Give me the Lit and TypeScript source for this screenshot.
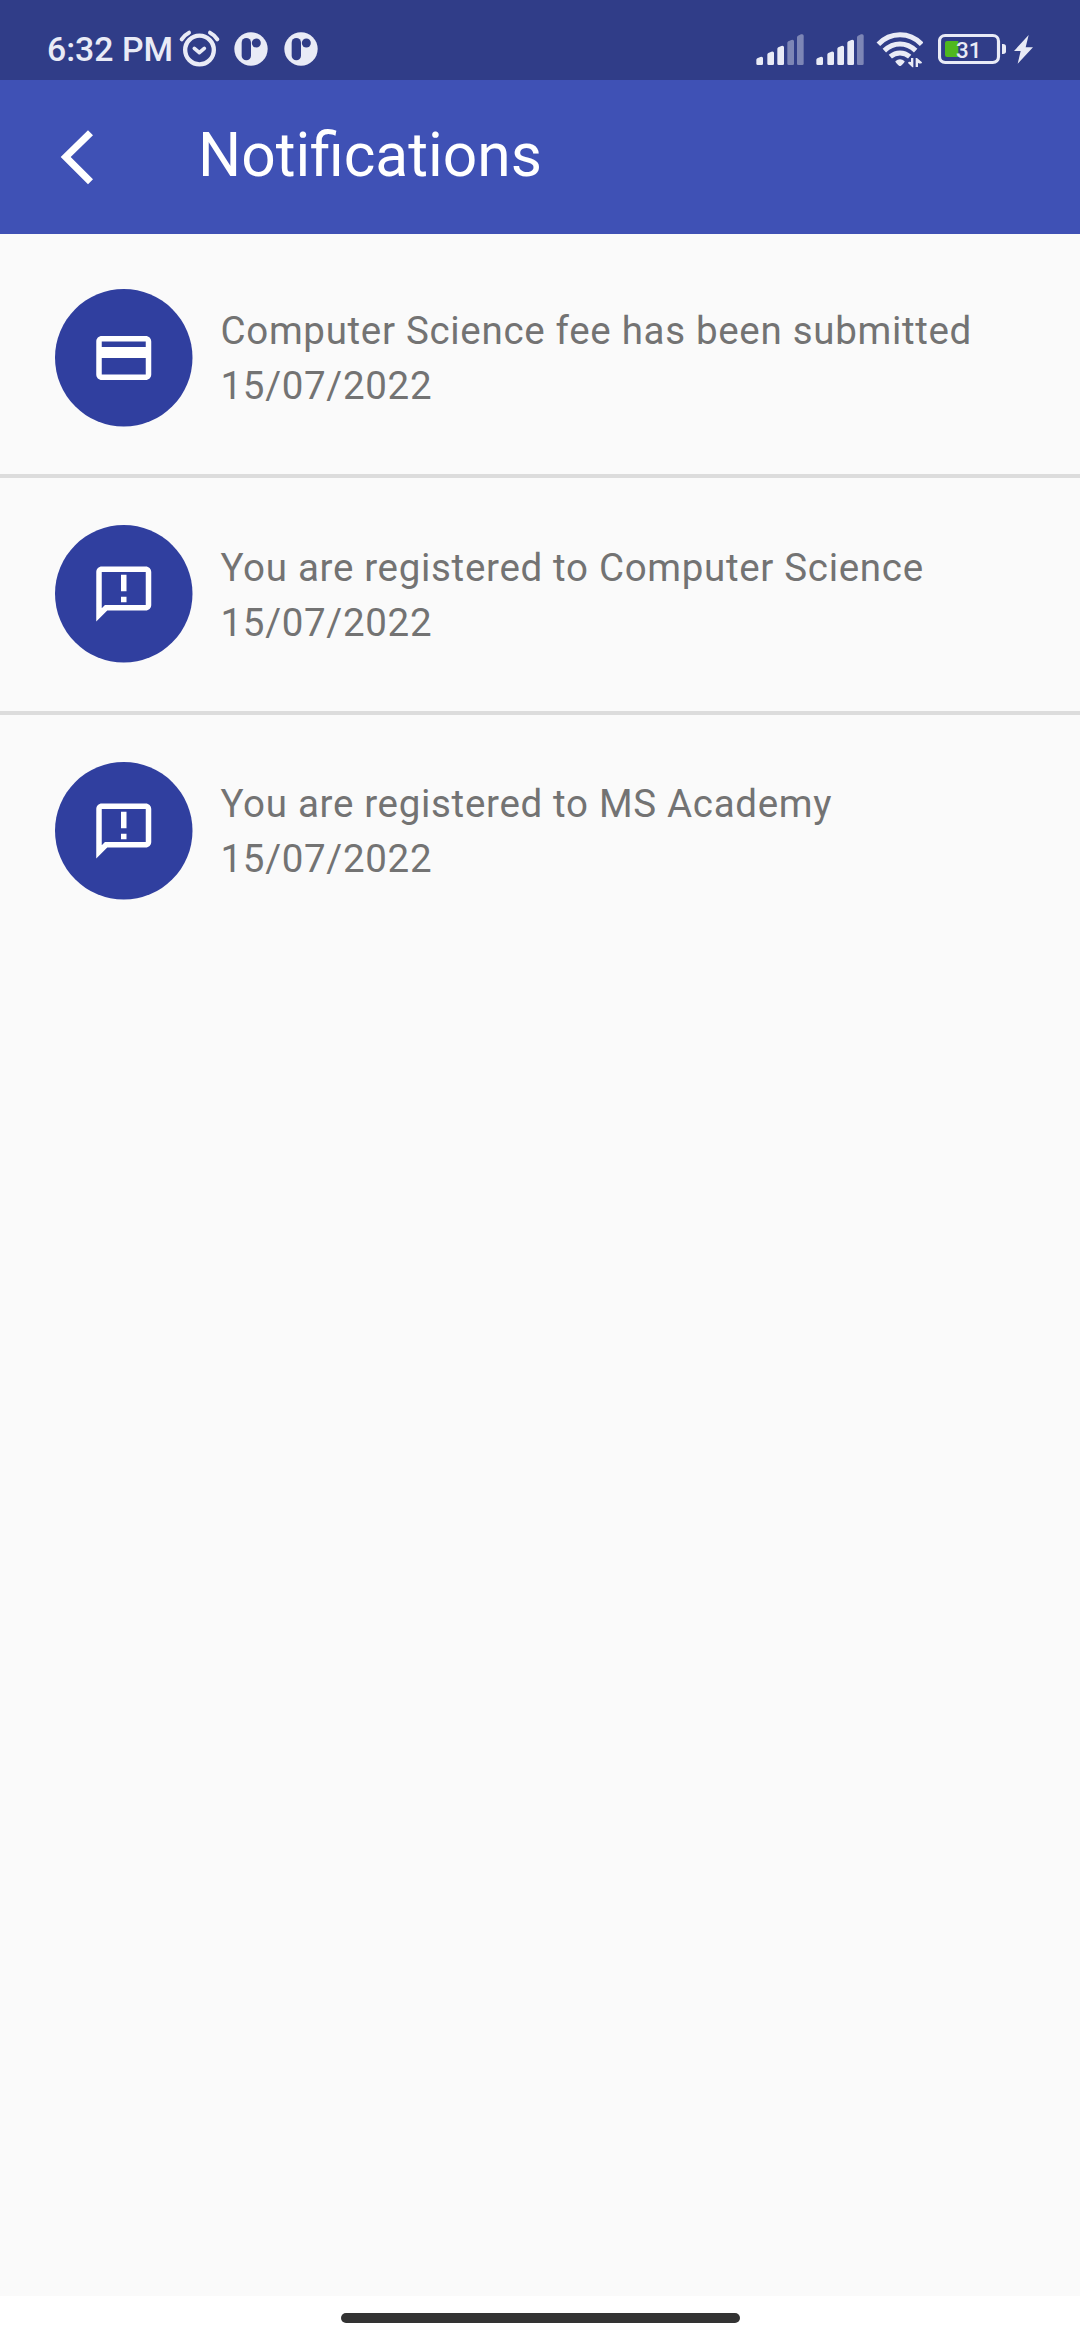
import { LitElement, html, css, svg } from "lit";
import { customElement, property } from "lit/decorators.js";

type Kind = "payment" | "announcement";

interface Notice {
  kind: Kind;
  text: string;
  date: string;
}

const NOTICES: Notice[] = [
  { kind: "payment", text: "Computer Science fee has been submitted", date: "15/07/2022" },
  { kind: "announcement", text: "You are registered to Computer Science", date: "15/07/2022" },
  { kind: "announcement", text: "You are registered to MS Academy", date: "15/07/2022" },
];

const GLYPHS: Record<Kind, string> = {
  payment:
    "M20 4H4c-1.11 0-1.99.89-1.99 2L2 18c0 1.11.89 2 2 2h16c1.11 0 2-.89 2-2V6c0-1.11-.89-2-2-2zm0 14H4v-6h16v6zm0-10H4V6h16v2z",
  announcement:
    "M20 2H4c-1.1 0-1.99.9-1.99 2L2 22l4-4h14c1.1 0 2-.9 2-2V4c0-1.1-.9-2-2-2zm0 14H5.17L4 17.17V4h16v12zM11 5h2v6h-2zM11 13h2v2h-2z",
};

@customElement("status-bar")
export class StatusBar extends LitElement {
  static styles = css`
    :host {
      display: flex;
      justify-content: space-between;
      box-sizing: border-box;
      height: 80px;
      padding: 10px 47px 0 47px;
      background: #303d88;
      color: #e9ebf6;
      font-family: Roboto, sans-serif;
    }
    .group {
      display: flex;
      align-items: flex-start;
      height: 70px;
    }
    .time {
      width: 131px;
      font-size: 33.8px;
      font-weight: 500;
      line-height: 80px;
      white-space: nowrap;
    }
    svg {
      display: block;
      height: 70px;
      fill: currentColor;
    }
    .alarm {
      width: 43px;
      margin-right: 13px;
    }
    .app {
      width: 34px;
      margin-right: 16px;
    }
    .signal {
      width: 48px;
      margin-right: 12px;
    }
    .wifi {
      width: 47px;
      margin-right: 15px;
    }
    .battery {
      width: 68px;
      margin-right: 8px;
    }
    .bolt {
      width: 19px;
    }
    .line {
      fill: none;
      stroke: currentColor;
    }
    .cut {
      fill: #303d88;
    }
    .faint {
      opacity: 0.42;
    }
    .charge {
      fill: #4fb81f;
    }
    .level {
      font-size: 67px;
      font-weight: 500;
    }
  `;

  private appIcon() {
    return html`<svg class="app" viewBox="0 0 102 210">
      <circle cx="51" cy="117" r="50" />
      <rect class="cut" x="23" y="84" width="28" height="67" rx="14" />
      <circle class="cut" cx="67" cy="99" r="13.5" />
    </svg>`;
  }

  private signal(active: number) {
    const bars = [
      [1, 141],
      [34, 125],
      [64, 108],
      [94, 90],
      [123, 73],
    ];
    return html`<svg class="signal" viewBox="0 0 144 210">
      ${bars.map(
        ([x, y], i) => svg`<path
          class=${i < active ? "" : "faint"}
          d="M${x} ${y + 9}q0 -3 3 -5l9 -4q8 -2 8 4V161q0 4 -4 4H${x + 4}q-4 0 -4 -4z"
        />`
      )}
    </svg>`;
  }

  render() {
    return html`
      <div class="group">
        <span class="time">6:32 PM</span>
        <svg class="alarm" viewBox="444 0 129 210">
          <circle class="line" cx="508.500" cy="120" r="43" stroke-width="13" />
          <path class="line" stroke-width="12" stroke-linecap="round" d="M455 88Q463 75 477 68M562 88Q554 75 540 68" />
          <path class="line" stroke-width="11" stroke-linecap="round" stroke-linejoin="round" d="M493 115L508 128L523 115" />
        </svg>
        ${this.appIcon()} ${this.appIcon()}
      </div>
      <div class="group">
        ${this.signal(3)} ${this.signal(4)}
        <svg class="wifi" viewBox="408 0 141 210">
          <path class="line" stroke-width="15" d="M415 103Q442 74.500 480 74.500T545 103" />
          <path class="line" stroke-width="15" d="M433 122Q454 102 480 102T527 122" />
          <path class="line" stroke-width="15" d="M451 140Q464 129 480 129T509 140" />
          <path d="M466 154Q480 142 494 154Q494 158 483 167Q480 169 477 167Q466 158 466 154z" />
          <path d="M513 144h7v28h-3l-13 -13q1 -5 9 -3zM527 171V144h4l15 13q0 6 -12 2v12z" />
        </svg>
        <svg class="battery" viewBox="594 0 204 210">
          <rect class="line" x="598.500" y="76.500" width="177" height="81" rx="17" stroke-width="9.500" />
          <path d="M786 102h3q9 0 9 8v14q0 8 -9 8h-3z" />
          <path class="charge" d="M621 93h34v48h-34q-6 0 -6 -6V99q0 -6 6 -6z" />
          <text class="level" x="686" y="144" text-anchor="middle">31</text>
        </svg>
        <svg class="bolt" viewBox="822 0 57 210">
          <path d="M866 75L822 123H842L833 161L879 112H857z" />
        </svg>
      </div>
    `;
  }
}

@customElement("notice-row")
export class NoticeRow extends LitElement {
  @property({ attribute: false }) notice!: Notice;

  static styles = css`
    :host {
      display: flex;
      align-items: flex-start;
      gap: 27.5px;
      color: #737373;
      font: 400 38.5px/55px Roboto, sans-serif;
      letter-spacing: 0.6875px;
    }
    .badge {
      display: block;
      flex: none;
      width: 138px;
      height: 138px;
    }
    .disc {
      fill: #303f9f;
    }
    .glyph {
      fill: #fff;
    }
    .body {
      padding-top: 14.25px;
      white-space: nowrap;
    }
  `;

  render() {
    return html`
      <svg class="badge" viewBox="0 0 138 138">
        <circle class="disc" cx="68.750" cy="68.750" r="68.750" />
        <path class="glyph" transform="translate(35.750 36) scale(2.75)" d=${GLYPHS[this.notice.kind]} />
      </svg>
      <div class="body">
        <div>${this.notice.text}</div>
        <div>${this.notice.date}</div>
      </div>
    `;
  }
}

@customElement("app-root")
export class AppRoot extends LitElement {
  static styles = css`
    :host {
      display: flex;
      flex-direction: column;
      height: 2340px;
      background: #fafafa;
      font-family: Roboto, sans-serif;
    }
    .bar {
      display: flex;
      align-items: center;
      box-sizing: border-box;
      height: 154px;
      padding-left: 60px;
      background: #3f51b5;
      color: #fff;
    }
    .back {
      width: 34px;
      height: 56px;
      margin-right: 104px;
    }
    .title {
      margin: 0;
      padding-bottom: 3px;
      font-size: 60.5px;
      font-weight: 400;
      line-height: 72px;
    }
    .list {
      flex: 1;
    }
    .item {
      box-sizing: border-box;
      height: 236.5px;
      padding: 47px 55px 0;
    }
    .item:first-child {
      height: 240.25px;
      padding-top: 55px;
    }
    .item + .item {
      border-top: 4px solid #dcdcdc;
    }
    .home {
      display: flex;
      justify-content: center;
      box-sizing: border-box;
      height: 44px;
      padding-top: 17px;
      background: #fff;
    }
    .pill {
      width: 399px;
      height: 10px;
      border-radius: 5px;
      background: #333;
    }
  `;

  render() {
    return html`
      <status-bar></status-bar>
      <header class="bar">
        <svg class="back" viewBox="0 0 34 56">
          <path d="M28 1.200L.7 28L28 55.200L33 50.200L10.700 28L33 6.200z" fill="#fff" />
        </svg>
        <h1 class="title">Notifications</h1>
      </header>
      <main class="list">
        ${NOTICES.map((n) => html`<div class="item"><notice-row .notice=${n}></notice-row></div>`)}
      </main>
      <footer class="home"><div class="pill"></div></footer>
    `;
  }
}
